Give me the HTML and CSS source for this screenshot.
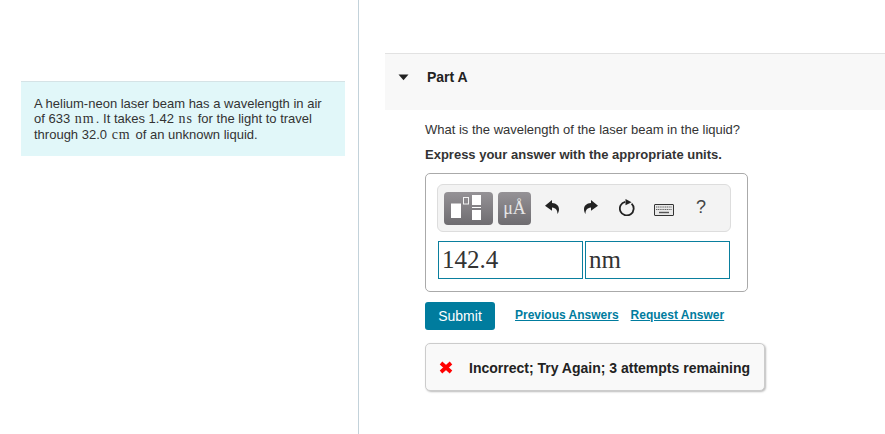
FILE: index.html
```html
<!DOCTYPE html>
<html lang="en">
<head>
<meta charset="utf-8">
<title>Part A</title>
<link rel="stylesheet" href="styles.css">
</head>
<body>
<div class="page">
  <aside class="left">
    <div class="intro">A helium-neon laser beam has a wavelength in air of 633 <span class="unit">nm</span>. It takes 1.42 <span class="unit">ns</span> for the light to travel through 32.0 <span class="unit">cm</span> of an unknown liquid.</div>
  </aside>
  <main class="right">
    <header class="part-head">
      <svg class="caret" width="11" height="7" viewBox="0 0 11 7"><path d="M0.5 0.5H10.5L5.5 6.2Z" fill="#222"/></svg>
      <span class="part-title">Part A</span>
    </header>
    <section class="body">
      <p class="question">What is the wavelength of the laser beam in the liquid?</p>
      <p class="instruct">Express your answer with the appropriate units.</p>
      <div class="answer">
        <div class="toolbar">
          <div class="tool tool-wide">
            <svg width="49" height="33" viewBox="0 0 49 33">
              <rect x="7" y="11.5" width="10" height="14.5" fill="#fff"/>
              <rect x="19.5" y="5.5" width="5" height="6.5" fill="none" stroke="#f2f2f2" stroke-width="1"/>
              <rect x="28" y="3" width="9" height="10" fill="#fff"/>
              <rect x="28" y="15" width="9" height="1" fill="#fff"/>
              <rect x="28" y="18" width="9" height="10" fill="#fff"/>
            </svg>
          </div>
          <div class="tool tool-unit"><span class="mu">μÅ</span></div>
          <svg class="icon undo" width="14" height="14" viewBox="0 0 14 14"><path d="M0 5.7 7 0V3C11.5 3.3 14 5.8 14 9.2 14 11 13.4 12.8 12.5 14 12.6 10.6 11 7.9 7 7.6V10.8Z" fill="#222"/></svg>
          <svg class="icon redo" width="14" height="14" viewBox="0 0 14 14"><path d="M14 5.7 7 0V3C2.5 3.3 0 5.8 0 9.2 0 11 .6 12.8 1.5 14 1.4 10.6 3 7.9 7 7.6V10.8Z" fill="#222"/></svg>
          <svg class="icon reset" width="16" height="17" viewBox="0 0 16 17"><path d="M12.6 4.6A6.9 6.9 0 1 1 6.2 2.8" fill="none" stroke="#222" stroke-width="1.8"/><path d="M6.5 0 12.6 3.3 6.5 6.2Z" fill="#222"/></svg>
          <svg class="icon kbd" width="20" height="12" viewBox="0 0 20 12">
            <rect x="0.5" y="0.5" width="19" height="11" rx="0.5" fill="#e8e8e8" stroke="#333"/>
            <path d="M2 3H18M2 5.5H18" stroke="#666" stroke-width="1.2" stroke-dasharray="1.2 .6"/>
            <path d="M5 8.5H15" stroke="#555" stroke-width="1.4"/>
          </svg>
          <span class="help">?</span>
        </div>
        <div class="inputs">
          <div class="field">142.4</div>
          <div class="field field-unit">nm</div>
        </div>
      </div>
      <div class="actions">
        <button class="submit" type="button">Submit</button>
        <a class="link link-first" href="#">Previous Answers</a>
        <a class="link" href="#">Request Answer</a>
      </div>
      <div class="feedback">
        <svg class="cross" width="14" height="13" viewBox="0 0 14 13"><path d="M2 2 12 11M12 2 2 11" stroke="#f00" stroke-width="3.8"/></svg>
        <span>Incorrect; Try Again; 3 attempts remaining</span>
      </div>
    </section>
  </main>
</div>
</body>
</html>
```
FILE: styles.css
```css
* { box-sizing: border-box; }
html, body { margin: 0; padding: 0; background: #fff; }
body { font-family: "Liberation Sans", Arial, sans-serif; color: #333; overflow: hidden; }
.page { display: flex; width: 885px; height: 434px; }
.left { width: 359px; flex: none; height: 434px; border-right: 1px solid #c3d2da; padding: 81px 13px 0 21px; }
.intro { height: 75px; background: #e1f7f9; border-top: 1px solid #d5e3e6; padding: 13.5px 13px 0 13px; font-size: 13px; line-height: 15.6px; }
.unit { font-family: "Liberation Serif", serif; font-size: 14px; letter-spacing: 1px; padding: 0 1.2px 0 1px; }
.right { flex: 1; padding: 53px 0 0 26px; min-width: 0; }
.part-head { height: 57px; background: #f8f8f8; border-top: 1px solid #e2e2e2; display: flex; align-items: flex-start; padding: 15px 0 0 13px; }
.caret { margin-top: 5px; flex: none; }
.part-title { margin-left: 18px; font-size: 14px; font-weight: 700; line-height: 16px; color: #222; }
.body { padding: 12px 0 0 40px; }
.question { margin: 0; font-size: 13px; line-height: 16px; }
.instruct { margin: 9px 0 0; font-size: 13px; line-height: 16px; font-weight: 700; }
.answer { width: 323px; height: 119px; margin-top: 10px; border: 1px solid #aaa; border-radius: 5px; padding: 10px 0 0 11px; }
.toolbar { width: 294px; height: 48px; background: #f3f3f3; border: 1px solid #ddd; border-radius: 6px; display: flex; align-items: center; padding-left: 6px; }
.tool { height: 33px; border-radius: 4px; background: linear-gradient(#959296, #6e6c70); display: flex; align-items: center; justify-content: center; color: #fff; }
.tool-wide { width: 49px; }
.tool-unit { width: 33px; margin-left: 5px; }
.mu { font-family: "Liberation Serif", serif; font-size: 18px; line-height: 22px; color: #e6e6e6; }
.icon { flex: none; }
.undo { margin-left: 14px; margin-bottom: 2px; }
.redo { margin-left: 25px; margin-bottom: 2px; }
.reset { margin-left: 21px; margin-bottom: 1px; }
.kbd { margin-left: 19px; margin-top: 3px; }
.help { margin-left: 22px; margin-bottom: 2px; font-size: 18px; line-height: 20px; color: #444; }
.inputs { display: flex; gap: 2px; margin-top: 9px; margin-left: 1px; }
.field { width: 145px; height: 38px; border: 1px solid #0a7f9e; font-family: "Liberation Serif", serif; font-size: 25px; line-height: 36px; padding-left: 3px; color: #333; }
.field-unit { padding-left: 3px; }
.actions { display: flex; align-items: flex-start; margin-top: 10px; }
.submit { width: 70px; height: 28px; border: 0; border-radius: 3px; background: #007c9e; color: #fff; font: 14px/28px "Liberation Sans", Arial, sans-serif; padding: 0; }
.link { font-size: 12px; font-weight: 700; line-height: 14px; color: #007c9e; margin-top: 6px; margin-left: 12px; }
.link-first { margin-left: 20px; }
.feedback { width: 340px; height: 48px; margin-top: 13px; background: #f9f9f9; border: 1px solid #ccc; border-radius: 5px; box-shadow: 1px 1px 2px #bbb; display: flex; align-items: center; padding: 2px 0 0 13px; font-size: 14px; font-weight: 700; color: #222; }
.cross { margin-right: 16px; margin-top: -1px; flex: none; }
```
